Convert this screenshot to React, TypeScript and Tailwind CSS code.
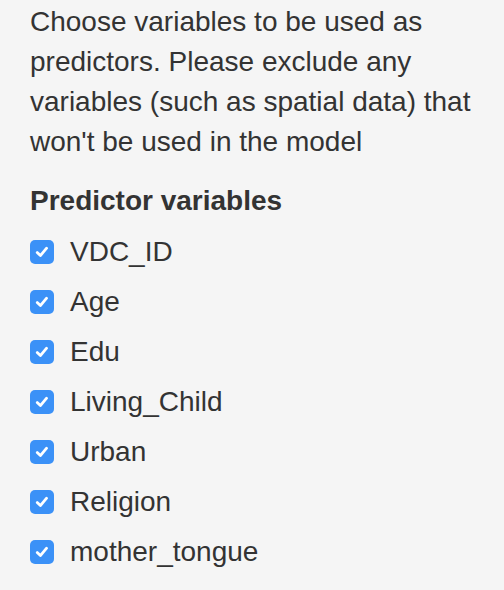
import React from "react";

const items = ["VDC_ID", "Age", "Edu", "Living_Child", "Urban", "Religion", "mother_tongue"];

function Check() {
  return (
    <span className="flex h-[24px] w-[24px] shrink-0 items-center justify-center rounded-[5px] bg-[#3b91f7]">
      <svg width="16" height="16" viewBox="0 0 16 16" fill="none">
        <path d="M3.2 8.6 L6.4 11.6 L12.6 4.2" stroke="white" strokeWidth="2.8" strokeLinecap="round" strokeLinejoin="round" />
      </svg>
    </span>
  );
}

export default function App() {
  return (
    <div
      className="min-h-[590px] w-[504px] bg-[#f5f5f5] pl-[30px] pr-[10px] pt-[2px] text-[#333333]"
      style={{ fontFamily: '"Liberation Sans", Arial, sans-serif' }}
    >
      <p className="m-0 text-[28px] leading-[40px]">
        Choose variables to be used as predictors. Please exclude any variables (such as spatial data) that won't be used in the model
      </p>
      <div className="mt-[19px] text-[28px] font-bold leading-[40px]">Predictor variables</div>
      <div className="mt-[11px] flex flex-col gap-[10px]">
        {items.map((it) => (
          <div key={it} className="flex h-[40px] items-center">
            <Check />
            <span className="ml-[16px] text-[28px] leading-[40px]">{it}</span>
          </div>
        ))}
      </div>
    </div>
  );
}
